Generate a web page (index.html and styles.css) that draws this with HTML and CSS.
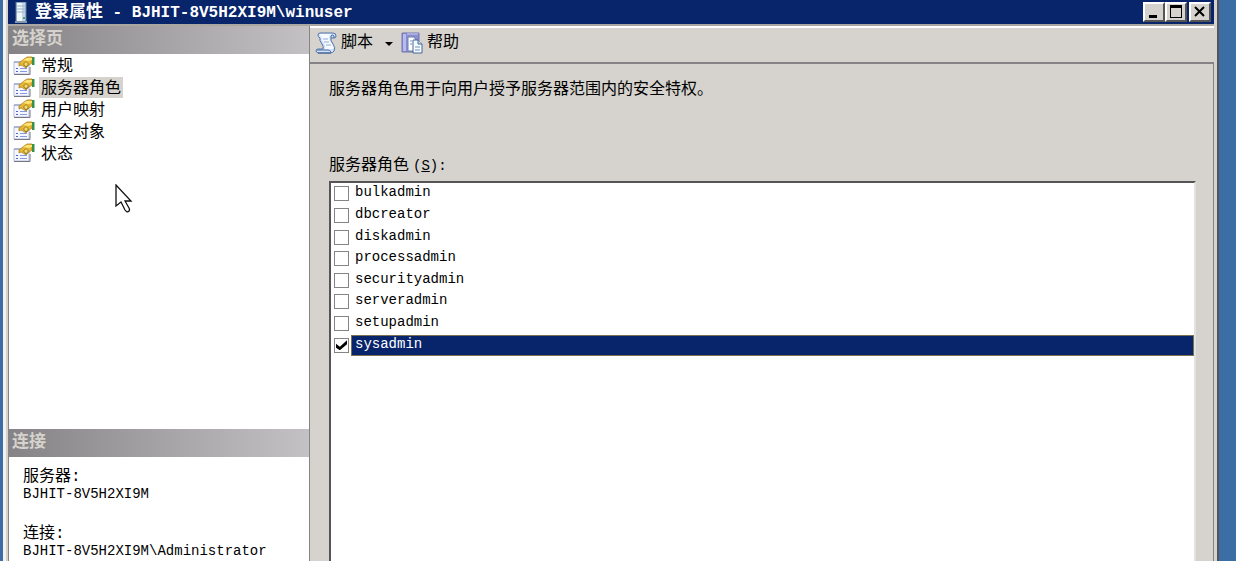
FILE: index.html
```html
<!DOCTYPE html>
<html lang="zh-CN">
<head>
  <meta charset="UTF-8">
  <meta name="viewport" content="width=device-width, initial-scale=1.0">
  <title>登录属性</title>
  <link rel="stylesheet" href="styles.css">
</head>
<body>
  <svg class="sprites" width="0" height="0" aria-hidden="true">
    <symbol id="page-icon" viewBox="0 0 22 20">
      <path d="M1 6h15v12H1z" fill="#f4f7ff" stroke="#b4bfde"/>
      <path d="M1 6h8" stroke="#8090b8"/>
      <path d="M1 18.500h16V11" fill="none" stroke="#77777f"/>
      <path d="M3 12.500h2M3 15.500h2" stroke="#5165c2"/>
      <path d="M7 12.500h7M7 15.500h7" stroke="#8797e0"/>
      <path d="M6 7l5-4 3-2h5v6l-3 2-3 3-3-2-2-1-2 1z" fill="#e9b630" stroke="#a98427" stroke-width=".8"/>
      <path d="M10 4l4-2h5v2l-4 1z" fill="#ffe477"/>
      <path d="M13 5.500l2.500 2.500-2.500 3-2.500-3z" fill="#f5dc69" stroke="#7a6425" stroke-width=".8"/>
      <path d="M19 1h2.500v8H19z" fill="#36924b"/>
    </symbol>
  </svg>

  <div class="window">
    <header class="titlebar">
      <svg class="server-icon" width="12" height="21" viewBox="0 0 12 21">
        <path d="M1 0h10v20H1z" fill="#c1d5e5" stroke="#587d9c"/>
        <path d="M2 1h5v18H2z" fill="#eef6fb"/>
        <path d="M2 4h8M2 7h8M2 10h8" stroke="#9bb3c8"/>
        <path d="M8 15h2v2H8z" fill="#4e9f78"/>
        <path d="M0 20h12" stroke="#8497a8" stroke-width="2"/>
      </svg>
      <h1><span class="title-name">登录属性</span> - BJHIT-8V5H2XI9M\winuser</h1>
      <div class="window-buttons">
        <button type="button" aria-label="最小化">
          <svg width="16" height="14" viewBox="0 0 16 14"><path d="M3 10h8v3H3z"/></svg>
        </button>
        <button type="button" aria-label="最大化">
          <svg width="16" height="14" viewBox="0 0 16 14"><path d="M2 0h12v13H2zM3 3v9h10V3z" fill-rule="evenodd"/></svg>
        </button>
        <button type="button" class="close" aria-label="关闭">
          <svg width="16" height="14" viewBox="0 0 16 14"><path d="M3 2l9 9M12 2l-9 9" stroke="#000" stroke-width="2"/></svg>
        </button>
      </div>
    </header>

    <div class="dialog">
      <aside class="sidebar">
        <nav class="pages">
          <h2>选择页</h2>
          <ul>
            <li><svg width="22" height="20"><use href="#page-icon"/></svg><a href="#">常规</a></li>
            <li><svg width="22" height="20"><use href="#page-icon"/></svg><a href="#" class="current">服务器角色</a></li>
            <li><svg width="22" height="20"><use href="#page-icon"/></svg><a href="#">用户映射</a></li>
            <li><svg width="22" height="20"><use href="#page-icon"/></svg><a href="#">安全对象</a></li>
            <li><svg width="22" height="20"><use href="#page-icon"/></svg><a href="#">状态</a></li>
          </ul>
        </nav>
        <section class="connection">
          <h2>连接</h2>
          <dl>
            <dt>服务器:</dt>
            <dd>BJHIT-8V5H2XI9M</dd>
            <dt>连接:</dt>
            <dd>BJHIT-8V5H2XI9M\Administrator</dd>
          </dl>
        </section>
      </aside>

      <main>
        <div class="toolbar">
          <button type="button">
            <svg width="22" height="22" viewBox="0 0 22 22">
              <path d="M5 1h13q3 0 3 3 0 2-2 2h-3q-1 2 2 6 3 4 1 7-1 2-4 2H3q-2-1-2-2 0-2 2-2h5q1-2-1-5Q4 8 5 6 3 5 3 3q0-2 2-2z" fill="#d3e2fb" stroke="#5472a5"/>
              <path d="M5 2h11q-2 1-2 4 0 3 3 6 2 3 1 5h-8q1-3-1-6-3-4-2-6-3-1-2-3z" fill="#f6faff"/>
              <path d="M8 7h5M9 10h5M11 13h5" stroke="#90acd9"/>
              <path d="M2 18h11q2 0 3 2M16 6V4q1-2 3 0v2" fill="none" stroke="#4669a1"/>
              <path d="M3 21h13" stroke="#34598f"/>
            </svg>
            <span>脚本</span>
            <i class="arrow"></i>
          </button>
          <button type="button">
            <svg width="22" height="22" viewBox="0 0 22 22">
              <path d="M1 1h17v19H1z" fill="#8b8fd0" stroke="#7073ad"/>
              <path d="M2 2h3v17H2z" fill="#b8bbef"/>
              <path d="M6 2h11" stroke="#a9acdf" stroke-width="2"/>
              <path d="M7 5h6l2 3v11H7z" fill="#fff" stroke="#6a81ae"/>
              <path d="M12 8h5l4 4v9h-9z" fill="#f5faff" stroke="#436795"/>
              <path d="M17 8v4h4" fill="#c9dcf2" stroke="#436795"/>
              <path d="M14 15h5M14 18h5M9 9h2M9 12h2" stroke="#6f94ba"/>
            </svg>
            <span>帮助</span>
          </button>
        </div>

        <div class="content">
          <p>服务器角色用于向用户授予服务器范围内的安全特权。</p>
          <h3 id="roles-title">服务器角色<span class="key">(<u>S</u>):</span></h3>
          <div class="listbox">
            <ul class="roles" aria-labelledby="roles-title">
              <li><input type="checkbox" id="bulkadmin"><label for="bulkadmin">bulkadmin</label></li>
              <li><input type="checkbox" id="dbcreator"><label for="dbcreator">dbcreator</label></li>
              <li><input type="checkbox" id="diskadmin"><label for="diskadmin">diskadmin</label></li>
              <li><input type="checkbox" id="processadmin"><label for="processadmin">processadmin</label></li>
              <li><input type="checkbox" id="securityadmin"><label for="securityadmin">securityadmin</label></li>
              <li><input type="checkbox" id="serveradmin"><label for="serveradmin">serveradmin</label></li>
              <li><input type="checkbox" id="setupadmin"><label for="setupadmin">setupadmin</label></li>
              <li class="selected"><input type="checkbox" id="sysadmin" checked><label for="sysadmin">sysadmin</label></li>
            </ul>
          </div>
        </div>
      </main>
    </div>
  </div>

  <svg class="cursor" width="18" height="30" viewBox="0 0 18 30" aria-hidden="true">
    <path d="M1 1v21l5-4 4 8q2 3 4 1 1-1 0-3l-4-7h6z" fill="#fff" stroke="#111" stroke-width="1.3"/>
  </svg>
</body>
</html>
```
FILE: styles.css
```css
* {
  box-sizing: border-box;
}

body {
  margin: 0;
  background: #3a6ea5;
  font-family: "Liberation Mono", "Noto Sans CJK SC", monospace;
  font-size: 16px;
  color: #000;
}

h1, h2, h3, p, ul, dl, dd {
  margin: 0;
  padding: 0;
}

ul {
  list-style: none;
}

button {
  font: inherit;
  color: inherit;
}

.sprites {
  position: absolute;
}

.window {
  display: flex;
  flex-direction: column;
  height: 100vh;
  margin: 0 17px 0 3px;
  padding: 0 3px 0 2px;
  background: #d6d3ce;
  border-left: 3px solid #f3f2f0;
  border-right: 2px solid #555;
  overflow: hidden;
}

/* title bar */
.titlebar {
  display: flex;
  align-items: center;
  height: 24px;
  flex: none;
  padding: 0 3px 0 7px;
  background: #08246b;
  color: #fff;
}

.titlebar h1 {
  flex: 1;
  margin-left: 8px;
  font-size: 16px;
  line-height: 24px;
  padding-top: 2px;
  white-space: nowrap;
}

.title-name {
  font-size: 17px;
}

.window-buttons {
  display: flex;
  height: 20px;
}

.window-buttons button {
  display: flex;
  align-items: center;
  justify-content: center;
  width: 22px;
  padding: 0;
  background: #d6d3ce;
  border: 2px solid;
  border-color: #fff #555 #555 #fff;
}

.window-buttons .close {
  margin-left: 2px;
}

.dialog {
  display: flex;
  flex: 1;
  min-height: 0;
  border-top: 2px solid #aaa6a1;
}

/* left side */
.sidebar {
  display: flex;
  flex-direction: column;
  width: 302px;
  flex: none;
  background: #fff;
  border-left: 1px solid #858385;
  border-right: 1px solid #858385;
}

.sidebar h2 {
  height: 28px;
  padding: 2px 0 0 3px;
  background: linear-gradient(to right, #858385, #c3c1c4);
  color: #d6d3ce;
  font-size: 17px;
  line-height: 24px;
}

.pages {
  flex: 1;
}

.pages ul {
  display: flex;
  flex-direction: column;
  height: 110px;
  padding-top: 1px;
}

.pages li {
  display: flex;
  align-items: center;
  flex: 1;
  min-height: 0;
  padding-left: 4px;
}

.pages a {
  height: 21px;
  margin-left: 4px;
  padding: 0 2px;
  color: #000;
  line-height: 24px;
  text-decoration: none;
}

.pages .current {
  background: #d6d3ce;
}

.connection dl {
  padding: 12px 14px 1px;
  line-height: 17px;
}

.connection dd {
  font-size: 14px;
}

.connection dd + dt {
  margin-top: 23px;
}

/* right side */
main {
  display: flex;
  flex-direction: column;
  flex: 1;
  min-width: 0;
}

.toolbar {
  display: flex;
  align-items: center;
  height: 38px;
  padding: 0 5px 4px;
  border-top: 2px solid #fff;
  border-bottom: 2px solid #858385;
}

.toolbar button {
  display: flex;
  align-items: center;
  padding: 0;
  background: none;
  border: 0;
  line-height: 24px;
}

.toolbar span {
  margin-left: 4px;
}

.arrow {
  margin: 2px 8px 0 12px;
  border: 4px solid transparent;
  border-top-color: #000;
  border-bottom: 0;
}

.content {
  display: flex;
  flex-direction: column;
  flex: 1;
  min-height: 0;
  padding: 14px 17px 0 19px;
  border-right: 1px solid #858385;
}

.content p {
  line-height: 24px;
}

.content h3 {
  margin: 52px 0 3px;
  font-size: 16px;
  font-weight: normal;
  line-height: 24px;
}

.key {
  margin-left: 4px;
  font-size: 14px;
}

.listbox {
  flex: 1;
  background: #fff;
  border: 2px solid #555;
  border-right-color: #e4e2df;
  border-bottom: 0;
}

.roles {
  display: flex;
  flex-direction: column;
  height: 173px;
  font-size: 14px;
}

.roles li {
  display: flex;
  align-items: center;
  flex: 1;
  min-height: 0;
  padding-left: 3px;
}

.roles input {
  display: flex;
  align-items: center;
  justify-content: center;
  appearance: none;
  width: 15px;
  height: 15px;
  margin: 0 2px 0 0;
  background: #fff;
  border: 1px solid #858385;
}

.roles input:checked::before {
  content: "";
  width: 11px;
  height: 10px;
  background: #000;
  clip-path: polygon(0 35%, 35% 65%, 100% 0, 100% 40%, 35% 100%, 0 75%);
}

.roles label {
  flex: 1;
  height: 21px;
  padding-left: 3px;
  border: 1px solid transparent;
  line-height: 17px;
}

.roles .selected label {
  background: #08246b;
  border-color: #7b704f;
  color: #fff;
}

.cursor {
  position: absolute;
  left: 115px;
  top: 184px;
}
```
